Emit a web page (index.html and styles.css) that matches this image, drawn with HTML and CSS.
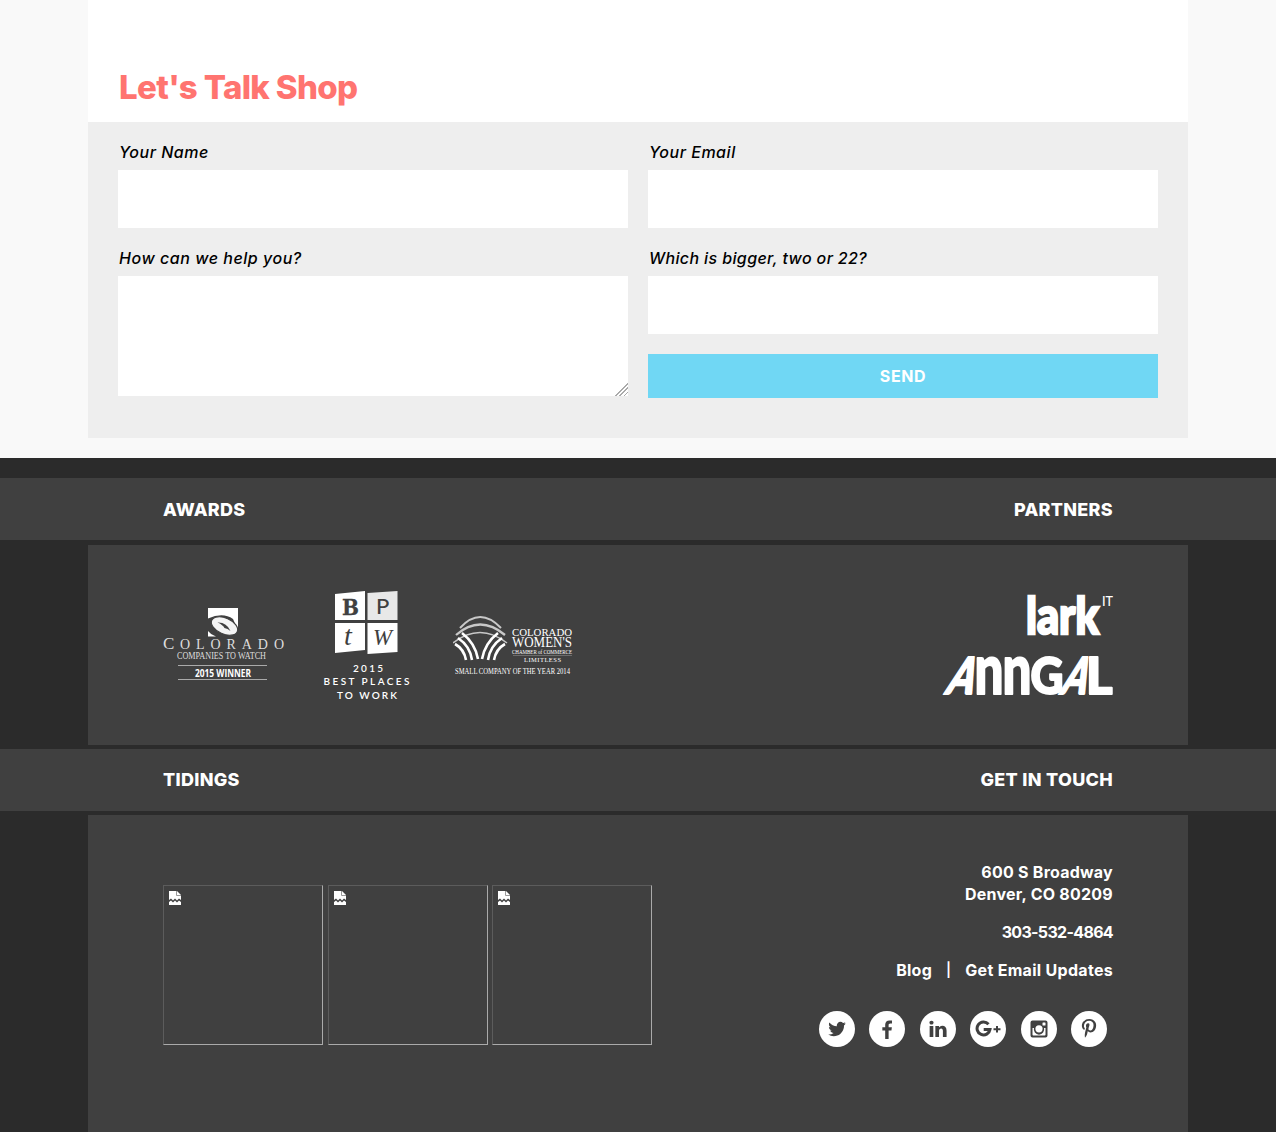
FILE: index.html
```html
<!DOCTYPE html>
<html lang="en">
<head>
<meta charset="utf-8">
<title>Let's Talk Shop</title>
<link rel="stylesheet" href="styles.css">
</head>
<body>
<main class="contact">
  <h2 class="contact-title">Let's Talk Shop</h2>
  <form class="contact-form">
    <div class="column">
      <label class="field"><span class="l-name">Your Name</span><input type="text"></label>
      <label class="field"><span class="l-help">How can we help you?</span><textarea></textarea></label>
    </div>
    <div class="column">
      <label class="field"><span class="l-email">Your Email</span><input type="text"></label>
      <label class="field"><span class="l-quiz">Which is bigger, two or 22?</span><input type="text"></label>
      <button type="button" class="send">SEND</button>
    </div>
  </form>
</main>
<footer class="footer">
  <div class="band band-first"><div class="inner"><h3>AWARDS</h3><h3>PARTNERS</h3></div></div>
  <section class="panel logos">
    <div class="awards">
      <svg class="colorado" viewBox="0 0 122 76" width="122" height="76">
        <path fill="#fff" d="M45 1h30v22L70 12Q60 5 45 11.500zM45 24q3 4 8 5.500h-8z"/>
        <ellipse cx="61.500" cy="19" rx="14" ry="8" transform="rotate(24 61.500 19)" fill="#f4f4f4" stroke="#404040" stroke-width="1.200"/>
        <path fill="#404040" d="M54.500 15.500q9-.5 13 8.500-3-2.500-6-3-2-3.500-7-5.500z"/>
        <g fill="#ddd" font-family="Liberation Serif, serif">
          <text x="0" y="42" font-size="17" textLength="10">C</text>
          <text x="17" y="42" font-size="14" textLength="104">OLORADO</text>
          <text x="14" y="52" font-size="9.500" textLength="89" lengthAdjust="spacingAndGlyphs">COMPANIES TO WATCH</text>
        </g>
        <path stroke="#aaa" d="M15 58.500h89M15 72.500h89"/>
        <text x="32" y="69.500" fill="#fff" font-family="Open Sans, sans-serif" font-weight="700" font-size="10" textLength="56" lengthAdjust="spacingAndGlyphs">2015 WINNER</text>
      </svg>
      <svg class="bptw" viewBox="0 0 88 112" width="88" height="112">
        <path fill="#fff" d="M12 4l30-3v29H12zM12 33h30v27l-30 3z"/>
        <path fill="#e8e8e8" d="M44.500 3l30-2v29h-30z"/>
        <path fill="#fff" d="M44.500 33h30v29l-30 2z"/>
        <g fill="#404040">
          <text x="19" y="24.500" font-family="DejaVu Serif, serif" font-weight="700" font-size="22" textLength="17" lengthAdjust="spacingAndGlyphs" stroke="#404040" stroke-width=".3">B</text>
          <text x="53" y="24" font-family="Lato, sans-serif" font-size="22" textLength="13">P</text>
          <text x="21" y="55" font-family="Liberation Serif, serif" font-style="italic" font-size="28" textLength="9">t</text>
          <text x="50" y="55" font-family="Liberation Serif, serif" font-style="italic" font-size="24" textLength="19" lengthAdjust="spacingAndGlyphs">W</text>
        </g>
        <g fill="#fff" font-family="Lato, sans-serif" font-weight="600" font-size="10">
          <text x="30" y="82" textLength="30">2015</text>
          <text x="0.500" y="95" textLength="86">BEST PLACES</text>
          <text x="14" y="109" textLength="60">TO WORK</text>
        </g>
      </svg>
      <svg class="women" viewBox="0 0 121 62" width="121" height="62">
        <g fill="none" stroke="#c8c8c8">
          <path stroke-width="2" d="M7 13Q27-9 48 13"/>
          <path stroke-width="2.300" d="M3 20Q27-1 52 20"/>
          <path stroke-width="1.500" d="M0 28Q27 7 54 28"/>
          <path stroke="#fff" stroke-width="2.600" d="M2 29q9 5 11 16M5 23q12 8 14 22M9 18q13 10 16 26M52 29q-9 5-11 16M49 23q-12 8-14 22M45 18q-13 10-16 26"/>
        </g>
        <g fill="#fff" font-family="Liberation Serif, serif">
          <text x="59" y="20.500" font-size="11" textLength="60" lengthAdjust="spacingAndGlyphs">COLORADO</text>
          <text x="59" y="32" font-size="14.500" textLength="60" lengthAdjust="spacingAndGlyphs">WOMEN'S</text>
          <text x="59" y="38.500" font-size="6.500" textLength="60" lengthAdjust="spacingAndGlyphs">CHAMBER of COMMERCE</text>
          <text x="71" y="47" font-size="6.500" textLength="37">LIMITLESS</text>
          <text x="2" y="59" font-size="7.300" textLength="115" lengthAdjust="spacingAndGlyphs">SMALL COMPANY OF THE YEAR 2014</text>
        </g>
        <path stroke="#999" stroke-width=".5" d="M60 40.500h59"/>
      </svg>
    </div>
    <div class="partners">
      <svg viewBox="0 0 87 42" width="87" height="42" fill="#fff">
        <text x="0" y="39" font-family="Lato, sans-serif" font-weight="900" font-size="51" textLength="73" lengthAdjust="spacingAndGlyphs" stroke="#fff" stroke-width="2.500">lark</text>
        <text x="76" y="10.500" font-family="Lato, sans-serif" font-size="14" textLength="11" lengthAdjust="spacingAndGlyphs">IT</text>
      </svg>
      <svg viewBox="0 0 170 42" width="170" height="42" fill="#fff" stroke="#fff" stroke-width="2" stroke-linejoin="round" font-family="Lato, sans-serif" font-weight="900">
        <text transform="translate(1 38) skewX(-20)" font-size="51" textLength="27" lengthAdjust="spacingAndGlyphs">A</text>
        <text x="31.500" y="38" font-size="70" textLength="29" lengthAdjust="spacingAndGlyphs">n</text>
        <text x="59.500" y="38" font-size="70" textLength="29" lengthAdjust="spacingAndGlyphs">n</text>
        <text x="87.500" y="38" font-size="51" textLength="33" lengthAdjust="spacingAndGlyphs">G</text>
        <text transform="translate(116 38) skewX(-20)" font-size="51" textLength="25" lengthAdjust="spacingAndGlyphs">A</text>
        <text x="143" y="38" font-size="51" textLength="26.500" lengthAdjust="spacingAndGlyphs">L</text>
      </svg>
    </div>
  </section>
  <div class="band"><div class="inner"><h3>TIDINGS</h3><h3>GET IN TOUCH</h3></div></div>
  <section class="panel touch">
    <div class="tidings">
      <div class="photo"><svg viewBox="0 0 12 14" width="12" height="14"><path fill="#fff" d="M0 0h8l4 4v5l-2-1.500-2 2-2-2-2 2-2-2L0 9zM0 11l2-1.500 2 2 2-2 2 2 2-2 2 1.500v3H0z"/><path fill="none" stroke="#999" d="M7.500 0v4.500H12"/></svg></div>
      <div class="photo"><svg viewBox="0 0 12 14" width="12" height="14"><path fill="#fff" d="M0 0h8l4 4v5l-2-1.500-2 2-2-2-2 2-2-2L0 9zM0 11l2-1.500 2 2 2-2 2 2 2-2 2 1.500v3H0z"/><path fill="none" stroke="#999" d="M7.500 0v4.500H12"/></svg></div>
      <div class="photo"><svg viewBox="0 0 12 14" width="12" height="14"><path fill="#fff" d="M0 0h8l4 4v5l-2-1.500-2 2-2-2-2 2-2-2L0 9zM0 11l2-1.500 2 2 2-2 2 2 2-2 2 1.500v3H0z"/><path fill="none" stroke="#999" d="M7.500 0v4.500H12"/></svg></div>
    </div>
    <div class="details">
      <p>600 S Broadway<br>Denver, CO 80209</p>
      <p class="phone">303-532-4864</p>
      <p class="links"><a>Blog</a><span class="divider">|</span><a class="updates">Get Email Updates</a></p>
      <div class="social">
        <a><svg viewBox="0 0 1792 1792" width="20" height="20"><path d="M1684 408q-67 98-162 167 1 14 1 42 0 130-38 259.500t-115.500 248.500-184.500 210.500-258 146-323 54.500q-271 0-496-145 35 4 78 4 225 0 401-138-105-2-188-64.500t-114-159.500q33 5 61 5 43 0 85-11-112-23-185.500-111.500t-73.500-205.500v-4q68 38 146 41-66-44-105-115t-39-154q0-88 44-163 121 149 294.500 238.500t371.500 99.500q-8-38-8-74 0-134 94.500-228.500t228.500-94.500q140 0 236 102 109-21 205-78-37 115-142 178 93-10 186-50z"/></svg></a>
        <a><svg viewBox="0 0 1792 1792" width="20" height="20"><path d="M1343 140v264h-157q-86 0-116 36t-30 108v189h293l-39 296h-254v759h-306v-759h-255v-296h255v-218q0-186 104-288.500t277-102.500q147 0 228 12z"/></svg></a>
        <a><svg viewBox="0 0 1792 1792" width="20" height="20"><path d="M477 625v991h-330v-991h330zm21-306q1 73-50.500 122t-135.500 49h-2q-82 0-132-49t-50-122q0-74 51.500-122.500t134.500-48.500 133 48.500 51 122.500zm1166 729v568h-329v-530q0-105-40.500-164.500t-126.500-59.500q-63 0-105.500 34.500t-63.500 85.500q-11 30-11 81v553h-329q2-399 2-647t-1-296l-1-48h329v144h-2q20-32 41-56t56.500-52 87-43.500 114.500-15.500q171 0 275 113.500t104 332.500z"/></svg></a>
        <a><svg viewBox="0 0 26 18" width="26" height="18"><path fill="none" stroke="#404040" stroke-width="3" d="M13.500 4.200A6.500 6.500 0 1 0 15 9.500H8.700"/><path d="M21 6h2v2.200h2.500v2H23v2.300h-2v-2.300h-2.500v-2H21z"/></svg></a>
        <a><svg viewBox="0 0 18 18" width="18" height="18"><path fill-rule="evenodd" d="M2.500.500h13q2 0 2 2v13q0 2-2 2h-13q-2 0-2-2v-13q0-2 2-2zM13 2.500q-.5 0-.5.500v2q0 .5.500.500h2q.5 0 .5-.5V3q0-.5-.5-.5zM2.500 8v6.800q0 .7.700.7h11.600q.7 0 .7-.7V8H14a5.200 5.200 0 1 1-10 0z"/><circle cx="9" cy="8.800" r="3.600" fill="#fff"/></svg></a>
        <a><svg viewBox="0 0 1792 1792" width="20" height="20"><path d="M256 597q0-108 37.500-203.500t103.500-166.500 152-123 185-78 202-26q158 0 294 66.500t221 193.500 85 287q0 96-19 188t-60 177-100 149.500-145 103-189 38.500q-68 0-135-32t-96-88q-10 39-28 112.500t-23.500 95-20.500 71-26 71-32 62.500-46 77.500-62 86.500l-14 5-9-10q-15-157-15-188 0-92 21.500-206.500t66.500-287.500 52-203q-32-65-32-169 0-83 52-156t132-73q61 0 95 40.500t34 102.500q0 66-44 191t-44 187q0 63 45 104.500t109 41.500q55 0 102-25t78.500-68 56-95 38-110.500 20-111 6.500-99.500q0-173-109.500-269.500t-285.500-96.500q-200 0-334 129.500t-134 328.500q0 44 12.500 85t27 65 27 45.500 12.500 30.500q0 28-15 73t-37 45q-2 0-17-3-51-15-90.500-56t-61-94.500-32.500-108-11-106.500z"/></svg></a>
      </div>
    </div>
  </section>
</footer>
</body>
</html>
```
FILE: styles.css
```css
* { box-sizing: border-box; }
body { margin: 0; background: #f9f9f9; font: 500 16px/22px Inter, sans-serif; color: #000; }
h2, h3, p { margin: 0; }
.contact { width: 1100px; margin: 0 auto 20px; background: #fff; }
.contact-title { height: 122px; padding: 67px 30px 0 31px; font-size: 33px; line-height: 40px; font-weight: 800; letter-spacing: -.65px; color: #ff7470; }
.contact-form { display: flex; gap: 20px; height: 316px; padding: 20px 30px; background: #eee; }
.column { flex: 1; display: flex; flex-direction: column; gap: 20px; }
.field { display: block; font-style: italic; line-height: 20px; letter-spacing: .53px; }
.field span { display: block; margin-bottom: 8px; padding-left: 1px; white-space: nowrap; }
.field .l-quiz { letter-spacing: .38px; }
input, textarea { display: block; width: 100%; height: 58px; margin: 0; padding: 0 10px; border: 0; background: #fff; }
textarea { height: 120px; resize: vertical; }
textarea::-webkit-resizer { background: linear-gradient(135deg, transparent 56%, #aaa 56% 61%, transparent 61% 70%, #aaa 70% 75%, transparent 75% 84%, #aaa 84% 89%, transparent 89%); }
.send { height: 44px; padding: 0; border: 0; background: #70d7f4; color: #fff; font: 700 16px/44px Inter, sans-serif; letter-spacing: .6px; }

.footer { height: 674px; padding-top: 20px; background: #2b2b2b; color: #fff; overflow: hidden; }
.band { height: 62px; background: #404040; }
.band-first { padding-top: 1px; }
.inner { width: 950px; margin: 0 auto; display: flex; justify-content: space-between; }
.inner h3 { font-size: 18px; line-height: 61px; font-weight: 800; letter-spacing: .3px; }
.panel { width: 1100px; margin: 5px auto 4px; padding: 0 75px; background: #404040; display: flex; justify-content: space-between; }
.logos { height: 200px; }
.awards { display: flex; align-items: flex-start; }
.colorado { margin-top: 62px; }
.bptw { margin: 45px 0 0 38px; }
.women { margin: 70px 0 0 42px; }
.partners { display: flex; flex-direction: column; align-items: flex-end; gap: 19px; padding-top: 50px; }
.partners svg { display: block; overflow: visible; }
.touch { height: 317px; margin: 4px auto 0; }
.tidings { display: flex; gap: 4.500px; padding-top: 70px; }
.photo { width: 160px; height: 160px; padding: 5px; border: 1px solid; border-color: #5c5c5c #aaa #aaa #5c5c5c; }
.photo svg { display: block; }
.details { padding-top: 46px; text-align: right; font-weight: 650; letter-spacing: .24px; }
.details p { margin-bottom: 16px; }
.details .phone { letter-spacing: -.68px; }
.links { display: flex; justify-content: flex-end; gap: 14px; }
.divider { font-size: 14px; font-weight: 600; }
.updates { letter-spacing: .3px; }
.social { display: flex; justify-content: flex-end; gap: 14.400px; padding: 14px 6px 0 0; }
.social a { width: 36px; height: 36px; border-radius: 50%; background: #fff; display: flex; align-items: center; justify-content: center; }
.social svg { fill: #404040; }
```
